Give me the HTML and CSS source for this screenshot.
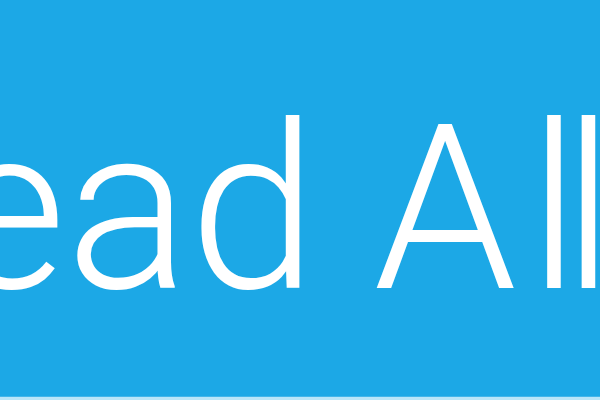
FILE: index.html
```html
<!DOCTYPE html>
<html>
<head>
<meta charset="utf-8">
<link rel="stylesheet" href="styles.css">
</head>
<body>
<div class="frame">
  <div class="button"><span class="label">Read A<span class="tail">ll</span></span></div>
  <div class="edge"></div>
  <div class="base"></div>
</div>
</body>
</html>
```
FILE: styles.css
```css
html, body { margin: 0; padding: 0; }
body { width: 600px; height: 400px; overflow: hidden; background: #b9e6f9; }
.frame { width: 600px; height: 400px; overflow: hidden; display: flex; flex-direction: column; }
.button {
  height: 396px;
  background: #1ca8e6;
  display: flex;
  align-items: flex-start;
  overflow: hidden;
}
.label {
  font-family: Roboto, "Helvetica Neue", sans-serif;
  font-weight: 300;
  font-size: 230px;
  line-height: 1;
  color: #fff;
  white-space: nowrap;
  margin-left: -199px;
  padding-top: 95px;
  flex-shrink: 0;
}
.tail { margin-left: 11px; letter-spacing: -17px; }
.edge { height: 1px; background: #43b6ea; }
.base { height: 3px; background: #b9e6f9; }
```
